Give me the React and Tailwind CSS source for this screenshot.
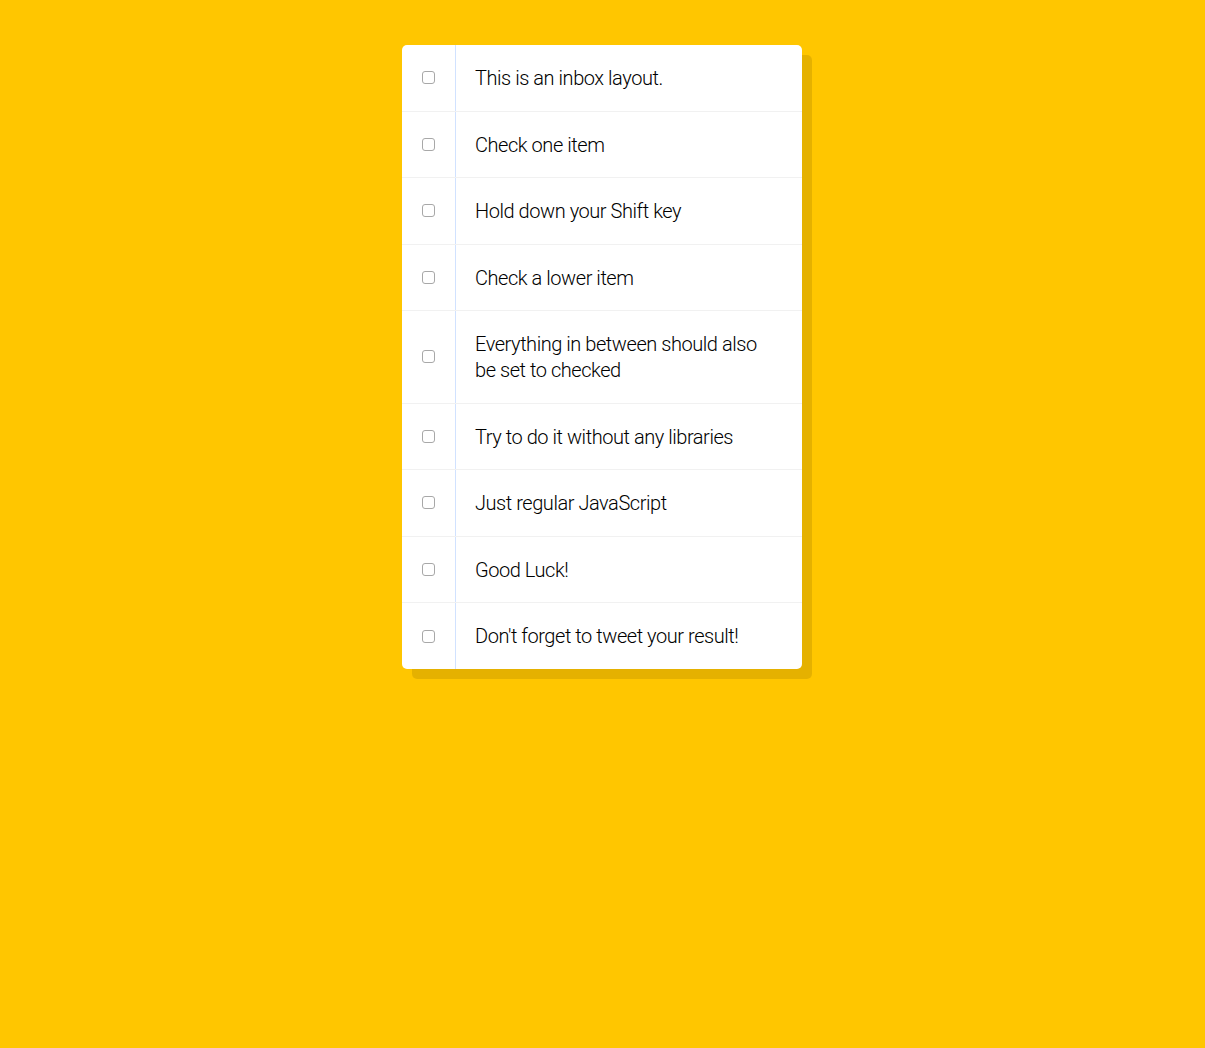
import React, { useRef, useState } from "react";

const items = [
  "This is an inbox layout.",
  "Check one item",
  "Hold down your Shift key",
  "Check a lower item",
  "Everything in between should also be set to checked",
  "Try to do it without any libraries",
  "Just regular JavaScript",
  "Good Luck!",
  "Don't forget to tweet your result!",
];

export default function App() {
  const [checked, setChecked] = useState(items.map(() => false));
  const last = useRef(null);

  const onClick = (i, e) => {
    const next = [...checked];
    const val = !next[i];
    next[i] = val;
    // shift-click checks everything in between
    if (e.shiftKey && val && last.current !== null) {
      const [a, b] = [Math.min(i, last.current), Math.max(i, last.current)];
      for (let k = a; k <= b; k++) next[k] = true;
    }
    last.current = i;
    setChecked(next);
  };

  return (
    <div className="flex min-h-[1048px] justify-center bg-[#ffc600] pr-px pt-[45px]">
      <div className="h-fit w-[400px] rounded-[5px] bg-white shadow-[10px_10px_0_rgba(0,0,0,0.1)]">
        {items.map((text, i) => (
          <div
            key={i}
            className="flex items-center border-b border-[#f1f1f1] last:border-b-0"
          >
            <input
              type="checkbox"
              checked={checked[i]}
              onChange={() => {}}
              onClick={(e) => onClick(i, e)}
              className="m-5 h-[13px] w-[13px] appearance-none rounded-[3px] border border-[#a8a8a8] bg-white checked:border-[#2f7ff6] checked:bg-[#2f7ff6]"
            />
            <p
              className={
                "flex-1 self-stretch border-l border-[#d1e2ff] pt-[21px] pb-[19px] pl-[19px] pr-[24px] text-[20px] leading-[25.6px] font-light tracking-[-0.45px] text-black font-['Roboto',sans-serif] " +
                (checked[i] ? "bg-[#f9f9f9] line-through" : "")
              }
            >
              {text}
            </p>
          </div>
        ))}
      </div>
    </div>
  );
}
